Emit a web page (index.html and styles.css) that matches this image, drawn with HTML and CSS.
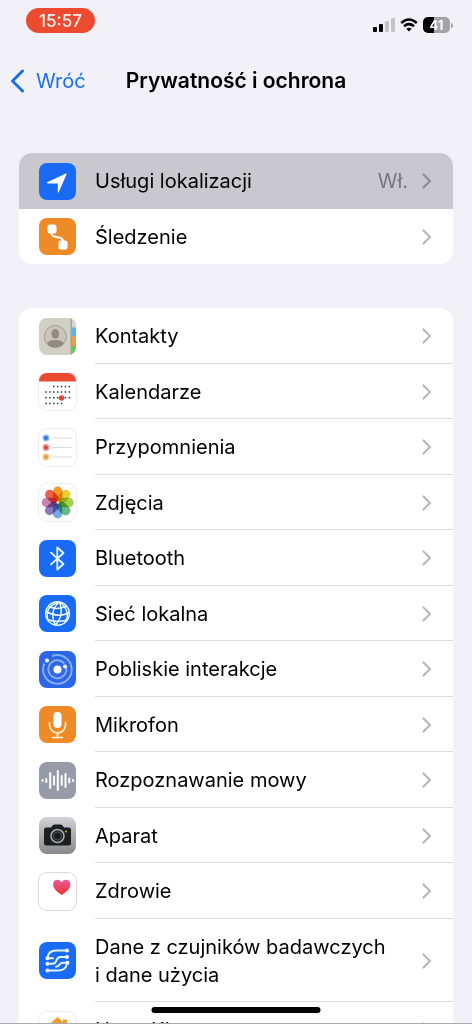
FILE: index.html
```html
<!DOCTYPE html>
<html lang="pl">
  <head>
    <meta charset="UTF-8" />
    <meta name="viewport" content="width=device-width, initial-scale=1.0" />
    <title>Prywatność i ochrona</title>
    <link rel="stylesheet" href="styles.css">
  </head>
  <body>
    <svg class="defs" aria-hidden="true">
      <symbol id="chevron" viewBox="0 0 10 16">
        <path d="M1.5 1.5 8 8 1.5 14.5" fill="none" stroke="currentColor" stroke-width="2.2" stroke-linecap="round" stroke-linejoin="round" />
      </symbol>
    </svg>

    <div class="status-bar">
      <span class="time">15:57</span>
      <div class="indicators">
        <svg class="signal" viewBox="0 0 22 14">
          <rect x="0" y="9" width="4" height="5" rx="1" />
          <rect x="6" y="6" width="4" height="8" rx="1" />
          <rect x="12" y="3" width="4" height="11" rx="1" fill="#c3c3c8" />
          <rect x="18" y="0" width="4" height="14" rx="1" fill="#c3c3c8" />
        </svg>
        <svg class="wifi" viewBox="0 0 18 14">
          <path d="M1.2 5Q9-2 16.800 5M4 8.200Q9 4 14 8.200" fill="none" stroke="#000" stroke-width="2.500" />
          <path d="M9 13.500 6.300 10.700Q9 8.700 11.700 10.700Z" />
        </svg>
        <div class="battery"><span>41</span></div>
      </div>
    </div>

    <header class="nav-bar">
      <a class="back" href="#">
        <svg viewBox="0 0 14 24"><path d="M12.500 2 2.500 12l10 10" fill="none" stroke="currentColor" stroke-width="3" stroke-linecap="round" stroke-linejoin="round" /></svg>
        Wróć
      </a>
      <h1>Prywatność i ochrona</h1>
    </header>

    <main>
      <ul class="group">
        <li>
          <a class="row active" href="#">
            <svg class="icon blue" viewBox="0 0 37 37"><path d="M8.300 19.200 26.800 10.600Q28 10.200 27.500 11.400L19.700 29.300Q19.100 30.400 18.800 29V20.500H9Q7.200 20.200 8.300 19.200Z" fill="#fff" /></svg>
            <span class="row-body"><span class="label">Usługi lokalizacji</span><span class="value">Wł.</span><svg class="chevron"><use href="#chevron" /></svg></span>
          </a>
        </li>
        <li>
          <a class="row" href="#">
            <svg class="icon orange" viewBox="0 0 37 37">
              <rect x="8.500" y="6.500" width="9" height="9" rx="2" fill="#fff" />
              <rect x="19.500" y="22.500" width="9" height="9" rx="2" fill="#fff" />
              <path d="M12.500 15c0 7 11.500 1.500 11.500 8" fill="none" stroke="#fff" stroke-width="2" />
            </svg>
            <span class="row-body"><span class="label">Śledzenie</span><svg class="chevron"><use href="#chevron" /></svg></span>
          </a>
        </li>
      </ul>

      <ul class="group">
        <li>
          <a class="row" href="#">
            <svg class="icon contacts" viewBox="0 0 37 37">
              <rect x="32" width="5" height="9.500" fill="#d8d5ca" />
              <rect x="32" y="9.500" width="5" height="9" fill="#59b5ef" />
              <rect x="32" y="18.500" width="5" height="9.500" fill="#f29a38" />
              <rect x="32" y="28" width="5" height="9" fill="#62c557" />
              <rect x="31.500" width="1.500" height="37" fill="#a5a49c" />
              <circle cx="16.300" cy="18.500" r="11" fill="#c9c5ba" stroke="#a19c93" />
              <ellipse cx="16.300" cy="15.800" rx="3.900" ry="4.800" fill="#928b83" />
              <path d="M8 25.700Q9 22 16.300 22T24.600 25.700Q21.500 29.500 16.300 29.500T8 25.700Z" fill="#928b83" />
            </svg>
            <span class="row-body"><span class="label">Kontakty</span><svg class="chevron"><use href="#chevron" /></svg></span>
          </a>
        </li>
        <li>
          <a class="row" href="#">
            <svg class="icon light" viewBox="0 0 37 37">
              <rect width="37" height="8.500" fill="#ea4a31" />
              <g fill="none" stroke="#333" stroke-width="1.500" stroke-dasharray="1.500 2.400">
                <path d="M14 13.500h18M6.200 19h26M6.200 24.700h26M6.200 30.500h18" />
              </g>
              <circle cx="22.500" cy="25" r="2.700" fill="#e8442d" />
            </svg>
            <span class="row-body"><span class="label">Kalendarze</span><svg class="chevron"><use href="#chevron" /></svg></span>
          </a>
        </li>
        <li>
          <a class="row" href="#">
            <svg class="icon light" viewBox="0 0 37 37">
              <path d="M13.500 9h19M13.500 18.500h19M13.500 28h19" stroke="#d9d9dc" stroke-width="1.200" />
              <circle cx="7" cy="9" r="2.700" fill="#2876e4" stroke="#8dbbf6" stroke-width="1.500" />
              <circle cx="7" cy="18.500" r="2.700" fill="#dc4a40" stroke="#f09a94" stroke-width="1.500" />
              <circle cx="7" cy="28" r="2.700" fill="#eb9a38" stroke="#f5c98f" stroke-width="1.500" />
            </svg>
            <span class="row-body"><span class="label">Przypomnienia</span><svg class="chevron"><use href="#chevron" /></svg></span>
          </a>
        </li>
        <li>
          <a class="row" href="#">
            <svg class="icon light photos" viewBox="0 0 37 37">
              <rect x="14" y="2.500" width="9.500" height="15" rx="4.700" fill="#f49a2c" />
              <rect x="14" y="2.500" width="9.500" height="15" rx="4.700" fill="#e6d331" transform="rotate(45 18.700 18.500)" />
              <rect x="14" y="2.500" width="9.500" height="15" rx="4.700" fill="#a8cf52" transform="rotate(90 18.700 18.500)" />
              <rect x="14" y="2.500" width="9.500" height="15" rx="4.700" fill="#67b989" transform="rotate(135 18.700 18.500)" />
              <rect x="14" y="2.500" width="9.500" height="15" rx="4.700" fill="#76aae0" transform="rotate(180 18.700 18.500)" />
              <rect x="14" y="2.500" width="9.500" height="15" rx="4.700" fill="#8a79bd" transform="rotate(225 18.700 18.500)" />
              <rect x="14" y="2.500" width="9.500" height="15" rx="4.700" fill="#cb83af" transform="rotate(270 18.700 18.500)" />
              <rect x="14" y="2.500" width="9.500" height="15" rx="4.700" fill="#ea6247" transform="rotate(315 18.700 18.500)" />
            </svg>
            <span class="row-body"><span class="label">Zdjęcia</span><svg class="chevron"><use href="#chevron" /></svg></span>
          </a>
        </li>
        <li>
          <a class="row" href="#">
            <svg class="icon blue" viewBox="0 0 37 37"><path d="m12 12.700 12.500 11.300-6.200 5.500V7.500l6.200 5.500L12 24.300" fill="none" stroke="#eafaff" stroke-width="1.800" stroke-linejoin="round" stroke-linecap="round" /></svg>
            <span class="row-body"><span class="label">Bluetooth</span><svg class="chevron"><use href="#chevron" /></svg></span>
          </a>
        </li>
        <li>
          <a class="row" href="#">
            <svg class="icon blue" viewBox="0 0 37 37">
              <g fill="none" stroke="#eafaff" stroke-width="1.500">
                <circle cx="18.500" cy="18.500" r="11.800" />
                <path d="M20.500 7C13 13 12 22 16.500 30M20.500 7C8 10 6.500 19 9.500 26M20.500 7C23.500 14 23 23 16.500 30M20.500 7C29 13 30.500 22 25.500 28" />
                <path d="M9.500 11.500Q18 15.500 27.500 11M7 16.500Q18 23 30 18M8.500 24.500Q18 28 28 25" />
              </g>
            </svg>
            <span class="row-body"><span class="label">Sieć lokalna</span><svg class="chevron"><use href="#chevron" /></svg></span>
          </a>
        </li>
        <li>
          <a class="row" href="#">
            <svg class="icon nearby" viewBox="0 0 37 37">
              <g fill="none" stroke="#86adf8" stroke-width="2">
                <path d="M13 5.200A14.300 14.300 0 1 1 5.400 12.500" />
                <path d="M25.300 12.500A9 9 0 1 0 27.300 17" />
                <circle cx="18.500" cy="18.500" r="5.500" stroke="#3568e4" />
              </g>
              <circle cx="18.500" cy="18.500" r="4" fill="#fff" />
              <circle cx="26" cy="15.500" r="2" fill="#fff" />
              <circle cx="8" cy="9.500" r="2" fill="#fff" />
            </svg>
            <span class="row-body"><span class="label">Pobliskie interakcje</span><svg class="chevron"><use href="#chevron" /></svg></span>
          </a>
        </li>
        <li>
          <a class="row" href="#">
            <svg class="icon orange" viewBox="0 0 37 37">
              <rect x="14.500" y="6" width="8" height="16" rx="4" fill="#fff" />
              <path d="M10.500 16.500v2.500a8 8 0 0 0 16 0v-2.500M18.500 27v4.500M13.500 31.500h10" fill="none" stroke="#fff2c8" stroke-width="1.700" stroke-linecap="round" />
            </svg>
            <span class="row-body"><span class="label">Mikrofon</span><svg class="chevron"><use href="#chevron" /></svg></span>
          </a>
        </li>
        <li>
          <a class="row" href="#">
            <svg class="icon gray" viewBox="0 0 37 37">
              <path d="M3.500 18v1M7.300 17v3M11.200 11v15M15 14.500v8M18.800 9v19M22.700 14v9M26.500 12v13M30.300 16.500v4M34 18v1" stroke="#fff" stroke-width="2" stroke-linecap="round" />
            </svg>
            <span class="row-body"><span class="label">Rozpoznawanie mowy</span><svg class="chevron"><use href="#chevron" /></svg></span>
          </a>
        </li>
        <li>
          <a class="row" href="#">
            <svg class="icon camera" viewBox="0 0 37 37">
              <path d="M7.500 10.500H12L14 8Q14.500 7.500 15.500 7.500H21.500Q22.500 7.500 23 8L25 10.500H29.500Q32 10.500 32 13V26Q32 28.500 29.500 28.500H7.500Q5 28.500 5 26V13Q5 10.500 7.500 10.500Z" fill="#1d1e20" />
              <circle cx="18.500" cy="19" r="6.500" fill="#222326" stroke="#aaaab0" stroke-width="1.500" />
              <circle cx="18.500" cy="19" r="4" fill="#1a1b1e" stroke="#505158" />
              <circle cx="27" cy="14.500" r="1.100" fill="#dba23c" />
            </svg>
            <span class="row-body"><span class="label">Aparat</span><svg class="chevron"><use href="#chevron" /></svg></span>
          </a>
        </li>
        <li>
          <a class="row" href="#">
            <svg class="icon light health" viewBox="0 0 37 37">
              <linearGradient id="heart" x2="0" y2="1"><stop stop-color="#ee5aa0" /><stop offset="1" stop-color="#e93428" /></linearGradient>
              <path d="M22.700 22Q14 16.500 14 11.500C14 6.500 20 5 22.700 9.300C25.500 5 31.500 6.500 31.500 11.500Q31.500 16.500 22.700 22Z" fill="url(#heart)" />
            </svg>
            <span class="row-body"><span class="label">Zdrowie</span><svg class="chevron"><use href="#chevron" /></svg></span>
          </a>
        </li>
        <li>
          <a class="row tall" href="#">
            <svg class="icon blue" viewBox="0 0 37 37">
              <g fill="none" stroke="#e2f6ff" stroke-width="2" stroke-linecap="round">
                <path d="M8.500 16C9 10.500 13 8.500 17 8.500H27.500" />
                <path d="M8.500 16.300H14" />
                <path d="M8.500 21.700H14C18.500 21.700 16 15 21.500 15H27.500" />
                <path d="M8.500 28.500H19C24 28.500 27.500 26.500 28 21" />
                <path d="M28 20.700H23.500C20.500 20.700 21 24.500 17 24.800" />
              </g>
              <g fill="#f2fcff">
                <circle cx="28" cy="8.500" r="2" /><circle cx="28" cy="15" r="2" /><circle cx="28.500" cy="20.700" r="2" />
                <circle cx="8.500" cy="16.300" r="2" /><circle cx="8.500" cy="21.700" r="2" /><circle cx="8.500" cy="28.500" r="2" />
              </g>
            </svg>
            <span class="row-body"><span class="label">Dane z czujników badawczych i&nbsp;dane użycia</span><svg class="chevron"><use href="#chevron" /></svg></span>
          </a>
        </li>
        <li>
          <a class="row" href="#">
            <svg class="icon light" viewBox="0 0 37 37">
              <path d="M6 16.500 17 6.200Q18.500 5 20 6.200L24 10V7.500H28V13.500L31.500 16.500Q32 18.500 29.500 18.500V31H8V18.500Q5 18.500 6 16.500Z" fill="#f09a30" />
              <path d="M12 31V18L18.500 12 25 18V31Z" fill="#d9741d" />
            </svg>
            <span class="row-body"><span class="label">HomeKit</span><svg class="chevron"><use href="#chevron" /></svg></span>
          </a>
        </li>
      </ul>
    </main>
    <div class="home-indicator"></div>
  </body>
</html>
```
FILE: styles.css
```css
* {
  margin: 0;
  padding: 0;
  box-sizing: border-box;
}
body {
  height: 100vh;
  overflow: hidden;
  background-color: #f1f1f7;
  border-bottom: 1px solid #a9a9ae;
  color: #000;
  font-family: Inter, "Liberation Sans", sans-serif;
  font-size: 20px;
}
a {
  color: inherit;
  text-decoration: none;
}
ul {
  list-style: none;
}
.defs {
  display: block;
  width: 0;
  height: 0;
}
.status-bar {
  display: flex;
  justify-content: space-between;
  padding: 8px 19px 0 26px;
  height: 50px;
}
.time {
  width: 69px;
  height: 25px;
  border-radius: 13px;
  background-color: #ee4a30;
  color: #fff0eb;
  font-size: 17px;
  font-weight: 500;
  line-height: 26px;
  text-align: center;
}
.indicators {
  display: flex;
  align-items: center;
  gap: 5px;
  height: 34px;
}
.signal {
  width: 22px;
  height: 14px;
}
.wifi {
  width: 18px;
  height: 14px;
}
.battery {
  display: flex;
  align-items: center;
}
.battery span {
  width: 27px;
  height: 16px;
  border-radius: 5px;
  background: linear-gradient(to right, #000 41%, #a3a3a8 41%);
  color: #fff;
  font-size: 13px;
  font-weight: 700;
  line-height: 16px;
  text-align: center;
}
.battery::after {
  content: "";
  width: 2px;
  height: 5px;
  margin-left: 1px;
  border-radius: 0 2px 2px 0;
  background-color: #a3a3a8;
}
.nav-bar {
  display: grid;
  grid-template-columns: 1fr auto 1fr;
  align-items: center;
  height: 61px;
  padding: 0 10px;
}
.back {
  display: flex;
  align-items: center;
  gap: 12px;
  color: #1a70e8;
}
.back svg {
  width: 14px;
  height: 24px;
}
h1 {
  font-size: 21px;
  font-weight: 600;
}
main {
  display: flex;
  flex-direction: column;
  gap: 44px;
  padding: 42px 19px 0;
}
.group {
  border-radius: 13px;
  background-color: #fff;
  overflow: hidden;
}
.row {
  display: flex;
  align-items: center;
  gap: 19px;
  height: 56px;
  padding-left: 20px;
}
.group li:nth-child(even) .row {
  height: 55px;
}
.group li .row.tall {
  height: 83px;
}
.row.active {
  background-color: #c9c8ce;
}
.row-body {
  flex: 1;
  align-self: stretch;
  display: flex;
  align-items: center;
  gap: 14px;
  padding-right: 21px;
  box-shadow: inset 0 -1px #dededf;
}
.active .row-body,
li:last-child .row-body {
  box-shadow: none;
}
.label {
  flex: 1;
  line-height: 28px;
}
.value {
  color: #77767b;
}
.chevron {
  width: 10px;
  height: 16px;
  color: #b9b9bd;
}
.active .chevron {
  color: #8e8d93;
}
.icon {
  flex: none;
  width: 37px;
  height: 37px;
  border-radius: 8px;
}
.blue {
  background-color: #196bf5;
}
.orange {
  background-color: #ef8b27;
}
.gray {
  background-color: #979ba7;
}
.nearby {
  background-color: #2a66e6;
}
.contacts {
  background-color: #d2cfc3;
}
.camera {
  background: linear-gradient(#d3d3d7, #88888d);
}
.light {
  background-color: #fff;
  box-shadow: 0 0 0 1px #eeeeef;
}
.health {
  box-shadow: 0 0 0 1px #d9d9dd;
}
.photos rect {
  mix-blend-mode: multiply;
}
.home-indicator {
  position: fixed;
  bottom: 11px;
  left: 50%;
  width: 169px;
  height: 6px;
  border-radius: 3px;
  background-color: #000;
  transform: translateX(-50%);
}
```
